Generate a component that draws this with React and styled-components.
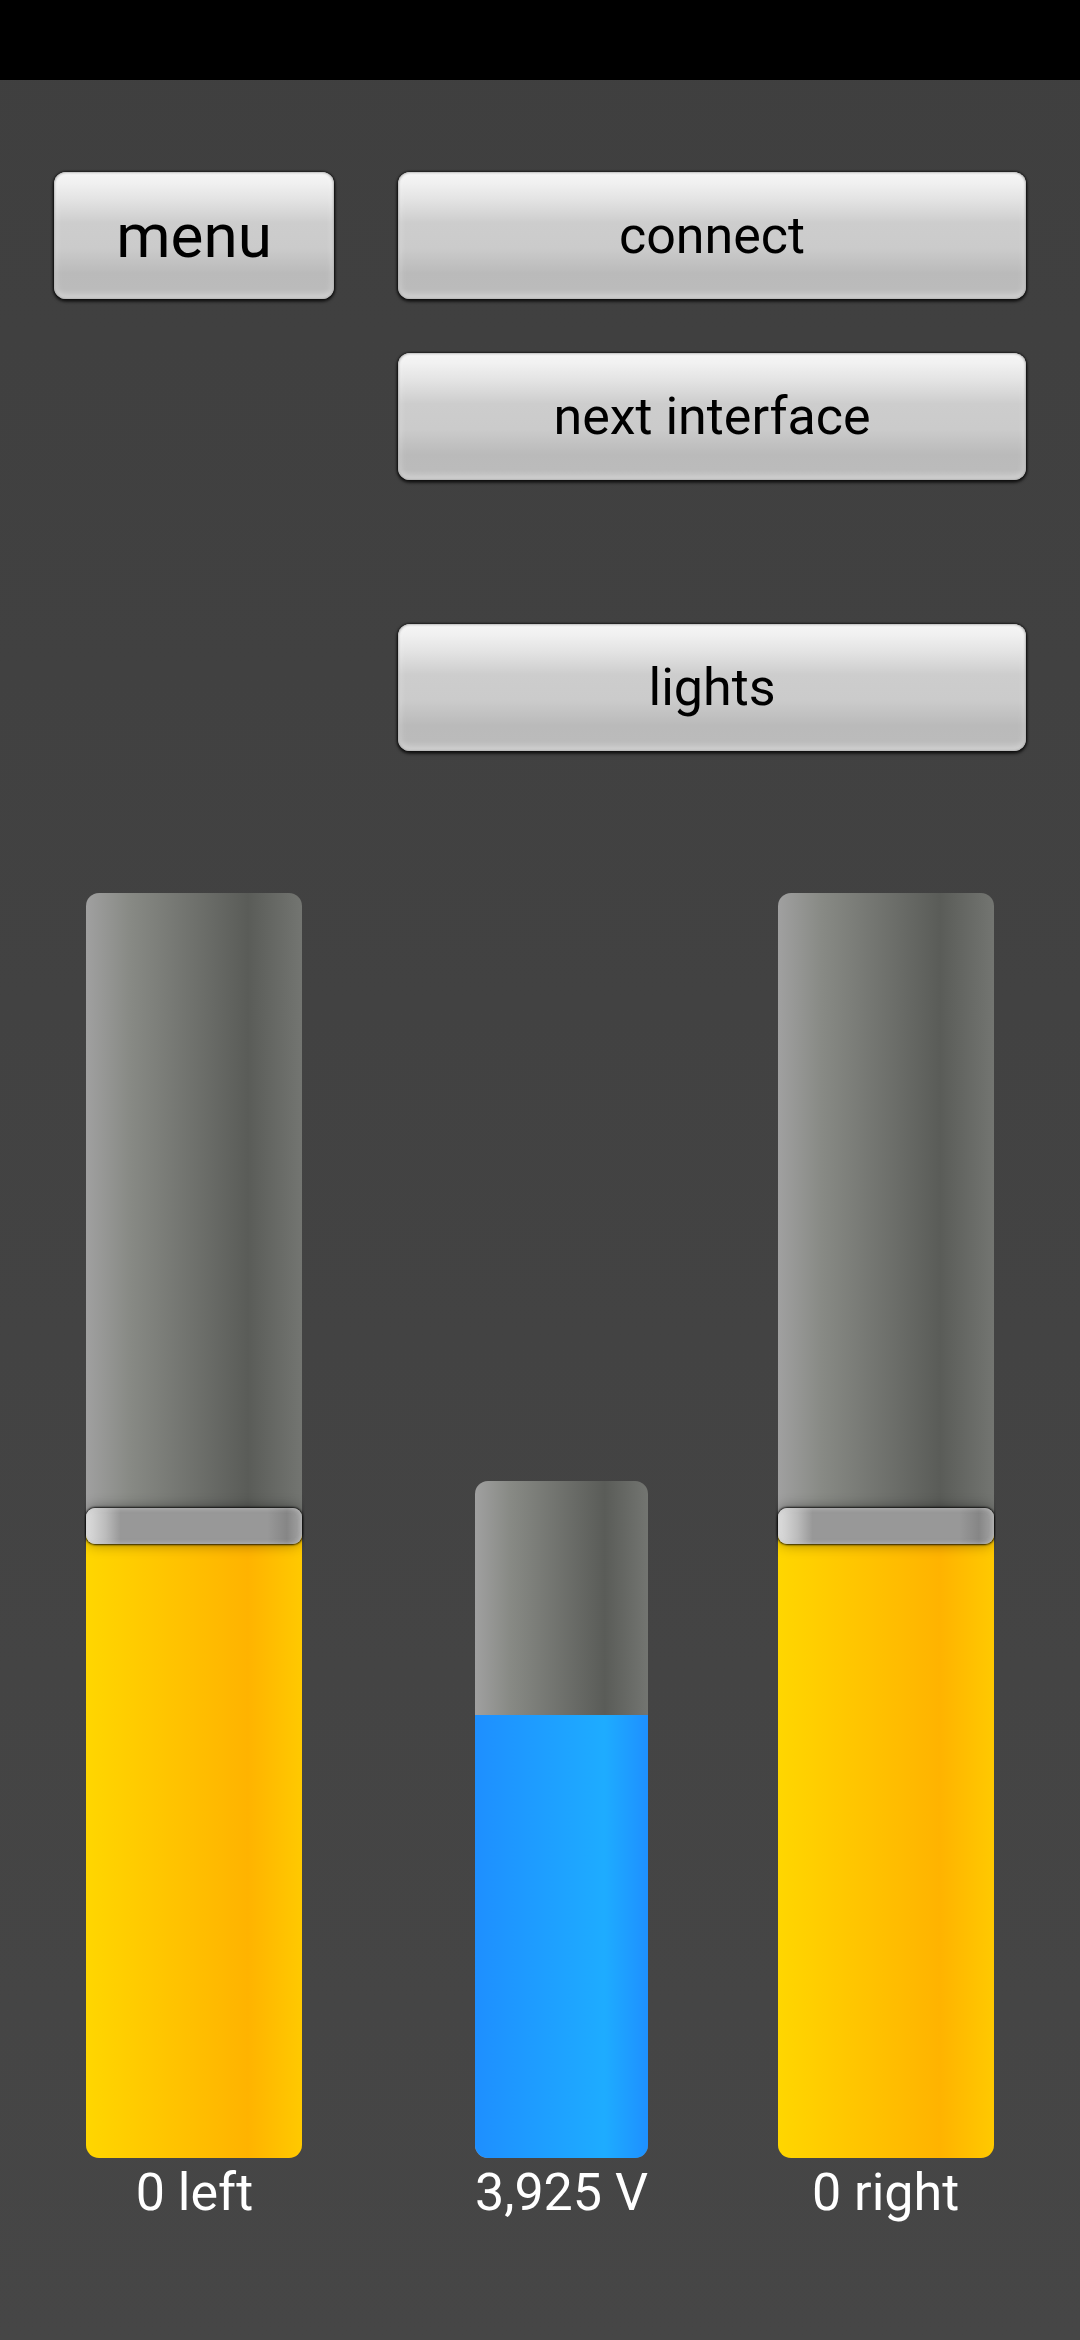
import React, { useState } from "react";
import styled, { createGlobalStyle } from "styled-components";

const steel = "linear-gradient(to right, #a0a0a0, #888a85 20%, #5a5c58 75%, #737571)";
const gold = "linear-gradient(to right, #ffd600, #ffb300 75%, #ffc900)";
const azure = "linear-gradient(to right, #1e8fff, #1eacff 75%, #1e90ff)";

const GlobalStyle = createGlobalStyle`
  *, *::before, *::after { box-sizing: border-box; }
  body {
    margin: 0;
    background: #444444;
    font-family: Roboto, "Liberation Sans", sans-serif;
  }
`;

const Screen = styled.main`
  display: flex;
  flex-direction: column;
  min-height: 100vh;
  background: linear-gradient(#3f3f3f, #464646);
`;

const StatusBar = styled.div`
  flex: none;
  height: 80px;
  background: #000000;
`;

const Controls = styled.section`
  display: grid;
  grid-template-columns: minmax(0, 280fr) minmax(0, 628fr);
  align-items: start;
  gap: 64px;
  padding: 92px 54px 142px;
`;

const Actions = styled.div`
  display: flex;
  flex-direction: column;
  gap: 144px;
`;

const ButtonStack = styled.div`
  display: flex;
  flex-direction: column;
  gap: 54px;
`;

const GlossyButton = styled.button`
  width: 100%;
  height: 127px;
  padding: 0;
  border: 0;
  border-radius: 12px;
  color: #000000;
  font-family: inherit;
  font-size: ${({ $large }) => ($large ? 62 : 52)}px;
  background: linear-gradient(
    #f5f5f5 0%,
    #f1f1f1 8%,
    #e3e3e3 22%,
    #cdcdcd 40%,
    #cbcbcb 60%,
    #bababa 80%,
    #bbbbbb 92%,
    #cacaca 100%
  );
  box-shadow:
    inset 0 0 2px 1px rgba(170, 170, 170, 0.8),
    inset 0 0 8px rgba(255, 255, 255, 0.45),
    0 0 2px 1px rgba(0, 0, 0, 0.5),
    0 2px 3px 1px rgba(0, 0, 0, 0.6);
`;

const Panel = styled.section`
  flex: 1;
  display: grid;
  grid-template-columns:
    [left-start] minmax(0, 216fr) [left-end] minmax(0, 173fr)
    [gauge-start] minmax(0, 172fr) [gauge-end] minmax(0, 130fr)
    [right-start] minmax(0, 216fr) [right-end];
  min-height: 720px;
  padding: 0 8% 112px;
`;

const Channel = styled.div`
  container-type: inline-size;
  grid-column: ${({ $area }) => $area};
  display: grid;
  grid-template-columns: minmax(0, 1fr);
  grid-template-rows: ${({ $rows }) => $rows} 70px;
  justify-items: center;
`;

const Caption = styled.label`
  color: #ffffff;
  font-size: 52px;
  line-height: 70px;
  white-space: nowrap;
`;

const Slider = styled.input`
  appearance: none;
  writing-mode: vertical-lr;
  direction: rtl;
  width: 100%;
  height: 100%;
  margin: 0;
  border-radius: 13px;
  background:
    ${gold} bottom / 100% var(--level) no-repeat,
    ${steel};

  &::-webkit-slider-thumb {
    appearance: none;
    width: 100cqw;
    height: 36px;
    border-radius: 9px;
    background: linear-gradient(
      to right,
      #dedede 0%,
      #bcbcbc 9%,
      #989898 16%,
      #989898 84%,
      #868686 93%,
      #a4a4a4 100%
    );
    box-shadow:
      inset 0 0 5px rgba(200, 200, 200, 0.8),
      0 0 2px 1px rgba(0, 0, 0, 0.8),
      0 0 14px rgba(0, 0, 0, 0.4);
    clip-path: inset(-20px -2px);
  }
`;

const GaugeTrack = styled.div`
  grid-row: 2;
  display: flex;
  flex-direction: column;
  justify-content: flex-end;
  width: 100%;
  overflow: hidden;
  border-radius: 13px;
  background: ${steel};
`;

const GaugeFill = styled.div`
  background: ${azure};
`;

const Reading = styled(Caption)`
  grid-row: 3;
`;

function MotorSlider({ side }) {
  const [speed, setSpeed] = useState(0);
  const id = `speed-${side}`;
  return (
    <Channel $area={side} $rows="minmax(0, 1fr)">
      <Slider
        id={id}
        type="range"
        min={-100}
        max={100}
        value={speed}
        onChange={(event) => setSpeed(Number(event.target.value))}
        style={{ "--level": `${(speed + 100) / 2}%` }}
      />
      <Caption htmlFor={id}>
        {speed} {side}
      </Caption>
    </Channel>
  );
}

function VoltageGauge({ volts, max }) {
  return (
    <Channel $area="gauge" $rows="588fr 678fr">
      <GaugeTrack
        role="meter"
        aria-labelledby="voltage"
        aria-valuemin={0}
        aria-valuemax={max}
        aria-valuenow={volts}
      >
        <GaugeFill style={{ height: `${(volts / max) * 100}%` }} />
      </GaugeTrack>
      <Reading as="span" id="voltage">
        {volts.toFixed(3).replace(".", ",")} V
      </Reading>
    </Channel>
  );
}

export default function App() {
  return (
    <>
      <GlobalStyle />
      <Screen>
        <StatusBar />
        <Controls>
          <GlossyButton type="button" $large>
            menu
          </GlossyButton>
          <Actions>
            <ButtonStack>
              <GlossyButton type="button">connect</GlossyButton>
              <GlossyButton type="button">next interface</GlossyButton>
            </ButtonStack>
            <GlossyButton type="button">lights</GlossyButton>
          </Actions>
        </Controls>
        <Panel>
          <MotorSlider side="left" />
          <VoltageGauge volts={3.925} max={6} />
          <MotorSlider side="right" />
        </Panel>
      </Screen>
    </>
  );
}
